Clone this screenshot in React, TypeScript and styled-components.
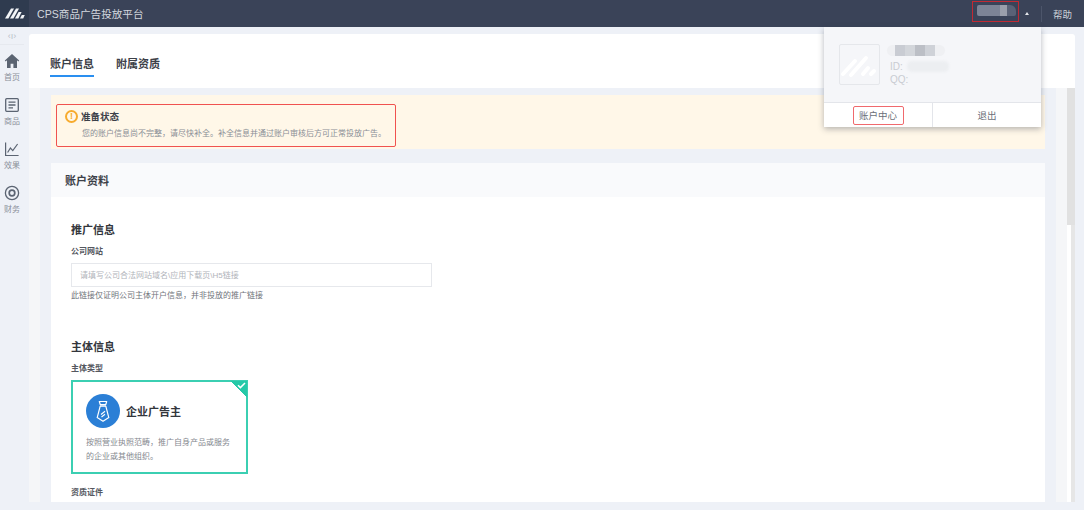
import React from "react";
import styled, { createGlobalStyle } from "styled-components";

const NAV_ITEMS = [
  { key: "home", label: "首页" },
  { key: "goods", label: "商品" },
  { key: "report", label: "效果" },
  { key: "finance", label: "财务" },
];

const NavIcon = ({ name }: { name: string }) => {
  if (name === "home") {
    return (
      <svg width="16" height="16" viewBox="0 0 16 16">
        <path d="M8 1 .8 7.4l.9 1L3 7.3V15h3.6v-4.2h2.8V15H13V7.3l1.3 1.1.9-1z" fill="#5b6472" />
      </svg>
    );
  }
  if (name === "goods") {
    return (
      <svg width="16" height="16" viewBox="0 0 16 16" fill="none" stroke="#5b6472" strokeWidth="1.3">
        <rect x="1.7" y="1.7" width="12.6" height="12.6" rx="1" />
        <path d="M4.5 5.2h7M4.5 8h7M4.5 10.8h4.5" />
      </svg>
    );
  }
  if (name === "report") {
    return (
      <svg width="16" height="16" viewBox="0 0 16 16" fill="none" stroke="#5b6472" strokeWidth="1.2">
        <path d="M1.6 1.5v13h13" />
        <path d="M3.6 11.5 6.4 7l2.4 2.6L13.6 3" />
      </svg>
    );
  }
  return (
    <svg width="16" height="16" viewBox="0 0 16 16" fill="none" stroke="#5b6472">
      <circle cx="8" cy="8" r="6.6" strokeWidth="1.3" />
      <circle cx="8" cy="8" r="2.8" strokeWidth="1.7" />
    </svg>
  );
};

const Logo = () => (
  <svg width="20" height="11" viewBox="0 0 20 11" fill="#f2f4f7">
    <path d="M0 10.5 6 .5h3L3.4 10.5z" />
    <path d="M5 10.5 11 .5h3L8.4 10.5z" />
    <path d="M10 10.5 13.6 4h3L13.4 10.5z" />
    <path d="M15 10.5 16.8 7h3L18.2 10.5z" />
  </svg>
);

const TieBadge = () => (
  <svg width="34" height="34" viewBox="0 0 34 34">
    <circle cx="17" cy="17" r="17" fill="#2b7fd6" />
    <path
      d="M13.3 7.5h7.4l-1 3.2h-5.4zM14.2 12.2h5.6l3 11.4-5.8 3.6-5.8-3.6z"
      fill="none"
      stroke="#fff"
      strokeWidth="1.2"
      strokeLinejoin="round"
    />
    <path d="M15 20.5l4-3.2M15.5 23l3.5-2.8" stroke="#fff" strokeWidth="1.1" />
  </svg>
);

const AvatarMark = () => (
  <svg width="39" height="39" viewBox="0 0 39 39" stroke="#fff" strokeWidth="4" strokeLinecap="round">
    <path d="M3 29 15 16M11 30 26 13M23 29l5-6M31 29l3-3" />
  </svg>
);

const MASK_TONES = ["#c9ccd3", "#d3d6db", "#bcbfc6", "#cfd2d8"];

const App = () => (
  <>
    <GlobalStyle />
    <Page>
      <TopBar>
        <LogoCell>
          <Logo />
        </LogoCell>
        <Brand>CPS商品广告投放平台</Brand>
        <TopRight>
          <UserName>
            <MaskBar />
          </UserName>
          <Caret />
          <TopDivider />
          <HelpLink>帮助</HelpLink>
        </TopRight>
        <UserMenu>
          <MenuInfo>
            <MenuAvatar>
              <AvatarMark />
            </MenuAvatar>
            <MenuText>
              <NameMask>
                {MASK_TONES.map((tone) => (
                  <MaskCell key={tone} style={{ background: tone }} />
                ))}
              </NameMask>
              <MenuLine>
                ID:
                <LineMask />
              </MenuLine>
              <MenuLine>QQ:</MenuLine>
            </MenuText>
          </MenuInfo>
          <MenuActions>
            <MenuAction>
              <AccountLink>账户中心</AccountLink>
            </MenuAction>
            <MenuAction>退出</MenuAction>
          </MenuActions>
        </UserMenu>
      </TopBar>

      <Body>
        <SideBar>
          <Collapse>‹ı›</Collapse>
          {NAV_ITEMS.map((item) => (
            <NavItem key={item.key}>
              <NavIcon name={item.key} />
              <NavLabel>{item.label}</NavLabel>
            </NavItem>
          ))}
        </SideBar>

        <Main>
          <TabPanel>
            <Tab $active>账户信息</Tab>
            <Tab>附属资质</Tab>
          </TabPanel>

          <ScrollArea>
            <Scroller>
              <Column>
                <Notice>
                  <NoticeBox>
                    <NoticeTitle>
                      <WarnDot>!</WarnDot>
                      准备状态
                    </NoticeTitle>
                    <NoticeText>您的账户信息尚不完整，请尽快补全。补全信息并通过账户审核后方可正常投放广告。</NoticeText>
                  </NoticeBox>
                </Notice>

                <Card>
                  <CardHeader>账户资料</CardHeader>
                  <CardBody>
                    <SectionTitle>推广信息</SectionTitle>
                    <FieldLabel>公司网站</FieldLabel>
                    <UrlInput readOnly placeholder="请填写公司合法网站域名\应用下载页\H5链接" />
                    <FieldHint>此链接仅证明公司主体开户信息，并非投放的推广链接</FieldHint>

                    <SectionTitle $spaced>主体信息</SectionTitle>
                    <FieldLabel>主体类型</FieldLabel>
                    <TypeOption>
                      <CheckCorner>
                        <svg width="9" height="7" viewBox="0 0 9 7" fill="none" stroke="#fff" strokeWidth="1.5">
                          <path d="M1 3.2 3.4 5.6 8 1" />
                        </svg>
                      </CheckCorner>
                      <TypeHead>
                        <TieBadge />
                        <TypeName>企业广告主</TypeName>
                      </TypeHead>
                      <TypeDesc>按照营业执照范畴，推广自身产品或服务的企业或其他组织。</TypeDesc>
                    </TypeOption>
                    <FieldLabel $below>资质证件</FieldLabel>
                  </CardBody>
                </Card>
              </Column>
            </Scroller>
            <ScrollRail>
              <ScrollThumb />
            </ScrollRail>
          </ScrollArea>
        </Main>
      </Body>
    </Page>
  </>
);

const GlobalStyle = createGlobalStyle`
  html, body {
    margin: 0;
    height: 100%;
    overflow: hidden;
    background: #eef1f7;
  }
  * {
    box-sizing: border-box;
  }
  body {
    font-family: "Liberation Sans", "Noto Sans CJK SC", sans-serif;
  }
`;

const Page = styled.div`
  width: 1084px;
  height: 510px;
  display: flex;
  flex-direction: column;
  background: #eef1f7;
`;

const TopBar = styled.header`
  position: relative;
  flex: none;
  height: 27px;
  display: flex;
  align-items: center;
  background: #3a4358;
`;

const LogoCell = styled.div`
  width: 29px;
  height: 100%;
  display: flex;
  align-items: center;
  justify-content: center;
  background: #2f3b4f;
`;

const Brand = styled.div`
  margin-left: 8px;
  font-size: 10.6px;
  color: #d4d8df;
`;

const TopRight = styled.div`
  margin-left: auto;
  height: 100%;
  display: flex;
  align-items: center;
`;

const UserName = styled.div`
  width: 47px;
  height: 21px;
  margin-top: -4px;
  padding: 3px 3px 5px 4px;
  border: 1px solid #c22a33;
`;

const MaskBar = styled.div`
  width: 39px;
  height: 11px;
  border-radius: 2px 6px 2px 2px;
  background: linear-gradient(90deg, #7d8496 0 58%, #9a9fab 58% 78%, #5a6276 78%);
  filter: blur(0.6px);
`;

const Caret = styled.span`
  margin-left: 6px;
  border: 2.5px solid transparent;
  border-top: 0;
  border-bottom: 3px solid #e6e8ec;
`;

const TopDivider = styled.span`
  width: 1px;
  height: 16px;
  margin-left: 12px;
  background: #4c556a;
`;

const HelpLink = styled.span`
  margin: 0 12px 0 11px;
  font-size: 9.5px;
  color: #cfd3da;
`;

const UserMenu = styled.div`
  position: absolute;
  z-index: 5;
  top: 27px;
  left: 824px;
  width: 217px;
  height: 100px;
  display: flex;
  flex-direction: column;
  background: #f5f6f9;
  box-shadow: 0 2px 6px rgba(40, 48, 66, 0.35);
`;

const MenuInfo = styled.div`
  flex: 1;
  display: flex;
  padding: 17px 0 0 15px;
`;

const MenuAvatar = styled.div`
  width: 41px;
  height: 41px;
  border: 1px solid #e5e7eb;
  border-radius: 2px;
  overflow: hidden;
`;

const MenuText = styled.div`
  margin-left: 10px;
`;

const NameMask = styled.div`
  display: flex;
  width: 58px;
  height: 11px;
  margin: 1px 0 4px -3px;
  padding: 0 8px;
  border-radius: 6px;
  background: #eff0f3;
`;

const MaskCell = styled.span`
  width: 10px;
  filter: blur(0.5px);
`;

const MenuLine = styled.div`
  display: flex;
  align-items: center;
  height: 13px;
  font-size: 10px;
  color: #c9ccd2;
`;

const LineMask = styled.span`
  width: 42px;
  height: 11px;
  margin-left: 4px;
  border-radius: 5px;
  background: #eceef1;
  filter: blur(1px);
`;

const MenuActions = styled.div`
  flex: none;
  height: 25px;
  display: flex;
  border-top: 1px solid #e3e5ea;
  background: #fff;
`;

const MenuAction = styled.div`
  flex: 1;
  display: flex;
  align-items: center;
  justify-content: center;
  font-size: 9.5px;
  color: #6a6f78;

  & + & {
    border-left: 1px solid #e3e5ea;
  }
`;

const AccountLink = styled.span`
  width: 51px;
  height: 19px;
  display: flex;
  align-items: center;
  justify-content: center;
  border: 1px solid #f0696d;
  border-radius: 2px;
`;

const Body = styled.div`
  flex: 1;
  min-height: 0;
  display: flex;
`;

const SideBar = styled.nav`
  flex: none;
  width: 29px;
  padding-right: 5px;
  background: #eef1f7;
`;

const Collapse = styled.div`
  height: 18px;
  margin-bottom: 8px;
  display: flex;
  align-items: center;
  justify-content: center;
  padding-top: 1px;
  border-bottom: 1px solid #e6e9ef;
  font-size: 9px;
  line-height: 1;
  color: #b9bec8;
`;

const NavItem = styled.div`
  height: 44px;
  display: flex;
  flex-direction: column;
  align-items: center;
  gap: 3px;
`;

const NavLabel = styled.span`
  font-size: 8px;
  line-height: 12px;
  color: #8b909a;
`;

const Main = styled.main`
  flex: 1;
  min-width: 0;
  display: flex;
  flex-direction: column;
  padding: 7px 9px 8px 0;
`;

const TabPanel = styled.div`
  flex: none;
  height: 54px;
  display: flex;
  gap: 22px;
  padding-left: 21px;
  background: #fff;
  border-radius: 3px 3px 0 0;
`;

const Tab = styled.div<{ $active?: boolean }>`
  height: 43px;
  padding-top: 22px;
  font-size: 11px;
  line-height: 16px;
  font-weight: 600;
  color: #3c4048;
  border-bottom: 2px solid ${(p) => (p.$active ? "#2a8ff0" : "transparent")};
`;

const ScrollArea = styled.div`
  flex: 1;
  min-height: 0;
  display: flex;
`;

const Scroller = styled.div`
  flex: 1;
  min-width: 0;
  padding: 0 11px;
  overflow: hidden;
  background: #f5f6f8;
`;

const ScrollRail = styled.div`
  flex: none;
  width: 8px;
  background: linear-gradient(90deg, #fff 0 4px, #e6e6e6 4px);
`;

const ScrollThumb = styled.div`
  height: 137px;
  background: #e1e1e1;
`;

const Column = styled.div`
  min-height: 100%;
  padding: 7px 11px 0;
  background: #eef1f7;
`;

const Notice = styled.div`
  height: 54px;
  padding: 9px 5px;
  background: #fff7e8;
`;

const NoticeBox = styled.div`
  width: 340px;
  height: 43px;
  padding: 3px 0 0 8px;
  border: 1px solid #f0524f;
  border-radius: 2px;
`;

const NoticeTitle = styled.div`
  display: flex;
  align-items: center;
  gap: 3px;
  height: 16px;
  font-size: 9.5px;
  font-weight: 600;
  color: #3c4048;
`;

const WarnDot = styled.span`
  width: 13px;
  height: 13px;
  display: flex;
  align-items: center;
  justify-content: center;
  border: 2px solid #f7ab2e;
  border-radius: 50%;
  font-size: 9px;
  font-weight: 700;
  color: #f7ab2e;
`;

const NoticeText = styled.div`
  margin: 3px 0 0 17px;
  font-size: 8px;
  line-height: 14px;
  white-space: nowrap;
  color: #8a8e96;
`;

const Card = styled.section`
  margin-top: 14px;
  padding-bottom: 40px;
  background: #fff;
`;

const CardHeader = styled.div`
  height: 34px;
  padding-left: 14px;
  display: flex;
  align-items: center;
  font-size: 11px;
  font-weight: 600;
  color: #3c4048;
  background: #f9fafc;
`;

const CardBody = styled.div`
  padding: 24px 20px 0;
`;

const SectionTitle = styled.div<{ $spaced?: boolean }>`
  margin-top: ${(p) => (p.$spaced ? "36px" : "0")};
  font-size: 11px;
  line-height: 18px;
  font-weight: 600;
  color: #33363c;
`;

const FieldLabel = styled.div<{ $below?: boolean }>`
  margin: ${(p) => (p.$below ? "13px" : "7px")} 0 5px;
  font-size: 8px;
  line-height: 12px;
  font-weight: 600;
  color: #55585f;
`;

const UrlInput = styled.input`
  display: block;
  width: 361px;
  height: 24px;
  padding: 0 8px;
  border: 1px solid #e6e8ec;
  outline: none;
  font-family: inherit;
  font-size: 8px;
  background: #fff;

  &::placeholder {
    color: #b1b4ba;
  }
`;

const FieldHint = styled.div`
  margin-top: 3px;
  font-size: 8px;
  line-height: 12px;
  color: #70747b;
`;

const TypeOption = styled.div`
  position: relative;
  width: 177px;
  height: 94px;
  padding: 12px 13px 0;
  border: 2px solid #3bcfb2;
`;

const CheckCorner = styled.span`
  position: absolute;
  top: -1px;
  right: -1px;
  width: 16px;
  height: 16px;
  display: flex;
  justify-content: flex-end;
  padding: 1px 1px 0 0;
  background: linear-gradient(225deg, #25c9a8 0 50%, transparent 50%);
`;

const TypeHead = styled.div`
  display: flex;
  align-items: center;
  gap: 6px;
`;

const TypeName = styled.div`
  font-size: 11px;
  font-weight: 600;
  color: #33363c;
`;

const TypeDesc = styled.div`
  margin-top: 8px;
  font-size: 8px;
  line-height: 14px;
  color: #85888f;
`;

export default App;
